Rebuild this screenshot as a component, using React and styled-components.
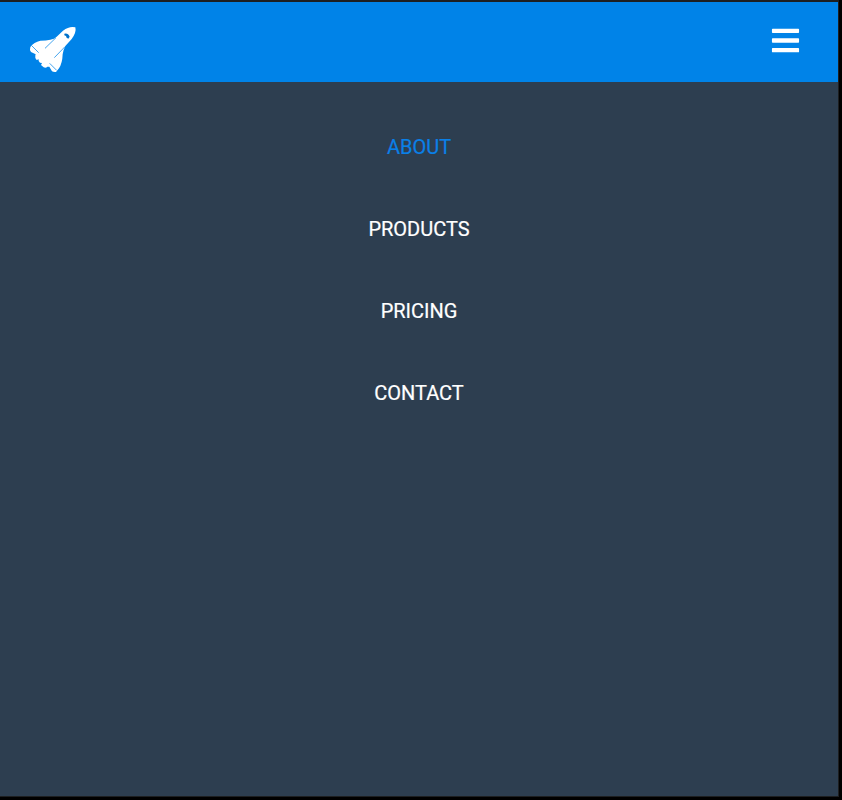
import React from "react";
import styled, { createGlobalStyle } from "styled-components";
import { FaBars } from "react-icons/fa";

const GlobalStyle = createGlobalStyle`
  * { box-sizing: border-box; }
  body { margin: 0; background: #000; }
`;
const Frame = styled.div`
  width: 842px;
  height: 800px;
  padding: 0 3px 3px 0;
  background: #000;
`;
const Screen = styled.div`
  height: 797px;
  background: #2d3e50;
  border: solid #1d1f21;
  border-width: 2px 1px 1px 0;
  font: 400 20px/24px Roboto, sans-serif;
`;
const Header = styled.header`
  display: flex;
  justify-content: space-between;
  height: 80px;
  padding: 24px 37px 0 28px;
  background: #0083e8;
  color: #fff;
`;
const ShuttleLogo = styled.svg`
  width: 50px;
  height: 50px;
  margin-top: -2px;
`;
const MenuIcon = styled(FaBars)`
  width: 31px;
  height: 31px;
  margin-top: -1px;
`;
const Menu = styled.nav`
  display: flex;
  flex-direction: column;
  align-items: center;
  padding-top: 24px;
`;
const MenuLink = styled.a`
  padding: 29px 8px;
  color: ${(p) => (p.$active ? "#0a80e8" : "#fff")};
  -webkit-text-stroke: 0.2px currentColor;
`;

function Shuttle() {
  return (
    <ShuttleLogo viewBox="24 24 150 150" aria-label="Space shuttle">
      <path
        fill="currentColor"
        d="M166 34Q170 49 155 69L136 90Q130 101 128 115Q127 142 117 157L108 168Q101 169 96 166L88 152L82 152Q78 157 71 154L63 147L66 141L60 140Q54 136 56 130L50 132Q44 126 46 118L47 115L33 108Q28 102 31 93Q42 78 61 74Q79 74 91 71Q103 69 110 62L129 44Q149 29 166 34Z"
      />
      <path
        fill="none"
        stroke="#0083e8"
        strokeWidth="2.2"
        d="M35 89L56 110M75 97L108 65M103 125L135 92M89 142L110 163"
      />
      <path fill="#0071ca" d="M133 53Q144 50 149 62L145 68Q138 67 138 60L133 58Z" />
    </ShuttleLogo>
  );
}

export default function App() {
  return (
    <Frame>
      <GlobalStyle />
      <Screen>
        <Header>
          <Shuttle />
          <MenuIcon />
        </Header>
        <Menu>
          <MenuLink $active>ABOUT</MenuLink>
          <MenuLink>PRODUCTS</MenuLink>
          <MenuLink>PRICING</MenuLink>
          <MenuLink>CONTACT</MenuLink>
        </Menu>
      </Screen>
    </Frame>
  );
}
